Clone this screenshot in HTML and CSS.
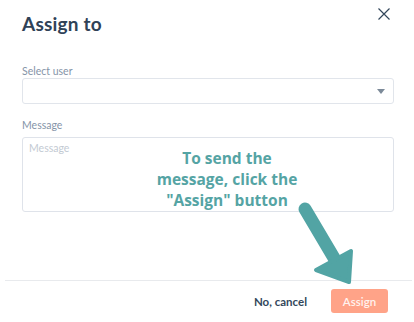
FILE: index.html
```html
<!DOCTYPE html>
<html>
<head>
<meta charset="utf-8">
<link rel="stylesheet" href="styles.css">
</head>
<body>
<div class="modal">
  <div class="content">
    <div class="header">
      <h1 class="title">Assign to</h1>
      <button class="close" aria-label="Close">
        <svg width="12" height="12" viewBox="0 0 12 12"><path d="M0.5 0.5L11.5 11.5M11.5 0.5L0.5 11.5" stroke="#33475b" stroke-width="1.2" fill="none"/></svg>
      </button>
    </div>
    <label class="label label-select">Select user</label>
    <div class="select">
      <svg class="caret" width="8" height="5" viewBox="0 0 8 5"><path d="M0 0H8L4 5Z" fill="#7c8a99"/></svg>
    </div>
    <label class="label label-message">Message</label>
    <div class="textarea">Message</div>
  </div>
  <div class="footer">
    <button class="btn-cancel">No, cancel</button>
    <button class="btn-assign">Assign</button>
  </div>
  <div class="note">To send the<br>message, click the<br>"Assign" button</div>
  <svg class="arrow" width="80" height="100" viewBox="290 200 80 100">
    <line x1="305" y1="209" x2="334" y2="258" stroke="#52a4a4" stroke-width="13" stroke-linecap="round"/>
    <polygon points="316,270 351,251 349,282" fill="#52a4a4" stroke="#52a4a4" stroke-width="4" stroke-linejoin="round"/>
  </svg>
</div>
</body>
</html>
```
FILE: styles.css
```css
html, body {
  margin: 0;
  padding: 0;
  background: #ffffff;
}
body {
  font-family: Lato, "Noto Sans", sans-serif;
  color: #33475b;
}
.modal {
  position: relative;
  width: 414px;
  height: 322px;
  overflow: hidden;
}
.content {
  padding: 0 20px 0 22px;
  display: flex;
  flex-direction: column;
}
.header {
  display: flex;
  justify-content: space-between;
  align-items: flex-start;
  height: 64px;
}
.title {
  margin: 12px 0 0 0;
  font-size: 19px;
  line-height: 24px;
  font-weight: 700;
  color: #2f4257;
  letter-spacing: 0.2px;
}
.close {
  margin: 8px 4px 0 0;
  padding: 0;
  border: 0;
  background: none;
  width: 12px;
  height: 12px;
  display: flex;
}
.label {
  font-size: 10.5px;
  line-height: 14px;
  color: #8594a8;
  height: 14px;
}
.select {
  height: 24px;
  border: 1px solid #e1e5eb;
  border-radius: 3px;
  display: flex;
  align-items: center;
  justify-content: flex-end;
  padding-right: 8px;
  margin-bottom: 14px;
}
.caret {
  display: block;
}
.label-message {
  height: 19px;
}
.textarea {
  height: 67px;
  border: 1px solid #dfe3ea;
  border-radius: 3px;
  padding: 3px 6px;
  font-size: 10.5px;
  line-height: 14px;
  color: #c3cad3;
}
.footer {
  position: absolute;
  left: 5px;
  right: 2px;
  top: 280px;
  border-top: 1px solid #e8eaed;
  display: flex;
  justify-content: flex-end;
  align-items: center;
  gap: 24px;
  padding: 8px 24px 0 0;
}
.btn-cancel {
  border: 0;
  background: none;
  padding: 0;
  font-family: Lato, "Noto Sans", sans-serif;
  font-size: 11.5px;
  font-weight: 700;
  color: #33475b;
}
.btn-assign {
  width: 57px;
  height: 24px;
  border: 0;
  border-radius: 3px;
  background: #ffa388;
  color: #fff2ee;
  font-family: Lato, "Noto Sans", sans-serif;
  font-size: 11.5px;
  font-weight: 600;
  padding: 0;
}
.note {
  position: absolute;
  left: 127px;
  width: 200px;
  top: 148px;
  text-align: center;
  font-family: "Open Sans", sans-serif;
  font-weight: 700;
  font-size: 15.5px;
  line-height: 21px;
  color: #55a4a4;
}
.arrow {
  position: absolute;
  left: 290px;
  top: 200px;
}
```
